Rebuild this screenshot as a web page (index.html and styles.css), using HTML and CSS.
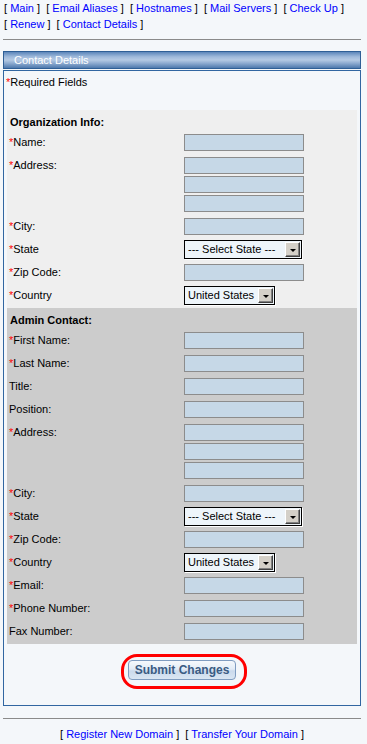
FILE: index.html
```html
<!DOCTYPE html>
<html lang="en">
<head>
    <meta charset="UTF-8">
    <meta name="viewport" content="width=device-width, initial-scale=1.0">
    <title>Contact Details</title>
    <link rel="stylesheet" href="styles.css">
</head>
<body>

    <div class="page">
        <div class="nav">
            [ <a href="#">Main</a> ] &nbsp;[ <a href="#">Email Aliases</a> ] &nbsp;[ <a href="#">Hostnames</a> ] &nbsp;[ <a href="#">Mail Servers</a> ] &nbsp;[ <a href="#">Check Up</a> ]<br>
            [ <a href="#">Renew</a> ] &nbsp;[ <a href="#">Contact Details</a> ]
        </div>

        <hr class="rule rule-top">

        <div class="bar">Contact Details</div>

        <div class="panel">
            <p class="required"><span class="req">*</span>Required Fields</p>

            <div class="section org">
                <div class="section-title">Organization Info:</div>
                <div class="row">
                    <label><span class="req">*</span>Name:</label>
                    <div class="fields"><input type="text" class="field"></div>
                </div>
                <div class="row">
                    <label><span class="req">*</span>Address:</label>
                    <div class="fields">
                        <input type="text" class="field">
                        <input type="text" class="field">
                        <input type="text" class="field">
                    </div>
                </div>
                <div class="row">
                    <label><span class="req">*</span>City:</label>
                    <div class="fields"><input type="text" class="field"></div>
                </div>
                <div class="row">
                    <label><span class="req">*</span>State</label>
                    <div class="fields">
                        <span class="dropdown state"><span class="dropdown-text">--- Select State ---</span><span class="dropdown-btn"><span class="arrow"></span></span></span>
                    </div>
                </div>
                <div class="row">
                    <label><span class="req">*</span>Zip Code:</label>
                    <div class="fields"><input type="text" class="field"></div>
                </div>
                <div class="row">
                    <label><span class="req">*</span>Country</label>
                    <div class="fields">
                        <span class="dropdown country"><span class="dropdown-text">United States</span><span class="dropdown-btn"><span class="arrow"></span></span></span>
                    </div>
                </div>
            </div>

            <div class="section admin">
                <div class="section-title">Admin Contact:</div>
                <div class="row">
                    <label><span class="req">*</span>First Name:</label>
                    <div class="fields"><input type="text" class="field"></div>
                </div>
                <div class="row">
                    <label><span class="req">*</span>Last Name:</label>
                    <div class="fields"><input type="text" class="field"></div>
                </div>
                <div class="row">
                    <label>Title:</label>
                    <div class="fields"><input type="text" class="field"></div>
                </div>
                <div class="row">
                    <label>Position:</label>
                    <div class="fields"><input type="text" class="field"></div>
                </div>
                <div class="row">
                    <label><span class="req">*</span>Address:</label>
                    <div class="fields">
                        <input type="text" class="field">
                        <input type="text" class="field">
                        <input type="text" class="field">
                    </div>
                </div>
                <div class="row">
                    <label><span class="req">*</span>City:</label>
                    <div class="fields"><input type="text" class="field"></div>
                </div>
                <div class="row">
                    <label><span class="req">*</span>State</label>
                    <div class="fields">
                        <span class="dropdown state"><span class="dropdown-text">--- Select State ---</span><span class="dropdown-btn"><span class="arrow"></span></span></span>
                    </div>
                </div>
                <div class="row">
                    <label><span class="req">*</span>Zip Code:</label>
                    <div class="fields"><input type="text" class="field"></div>
                </div>
                <div class="row">
                    <label><span class="req">*</span>Country</label>
                    <div class="fields">
                        <span class="dropdown country"><span class="dropdown-text">United States</span><span class="dropdown-btn"><span class="arrow"></span></span></span>
                    </div>
                </div>
                <div class="row">
                    <label><span class="req">*</span>Email:</label>
                    <div class="fields"><input type="text" class="field"></div>
                </div>
                <div class="row">
                    <label><span class="req">*</span>Phone Number:</label>
                    <div class="fields"><input type="text" class="field"></div>
                </div>
                <div class="row">
                    <label>Fax Number:</label>
                    <div class="fields"><input type="text" class="field"></div>
                </div>
            </div>

            <div class="submit-row">
                <span class="highlight"><button type="button" class="submit">Submit Changes</button></span>
            </div>
        </div>

        <hr class="rule rule-bottom">

        <div class="footer-links">
            [ <a href="#">Register New Domain</a> ] &nbsp;[ <a href="#">Transfer Your Domain</a> ]
        </div>
    </div>

</body>
</html>
```

FILE: styles.css
```css
body {
    font-family: "Liberation Sans", Arial, sans-serif;
    font-size: 11px;
    color: #000;
    background-color: #f4f7fa;
    margin: 0;
    padding: 0;
}

a {
    color: #0000ff;
    text-decoration: none;
}

.page {
    width: 358px;
    margin-left: 3px;
}

.nav {
    line-height: 16px;
    padding-left: 1px;
}

.rule {
    border: 0;
    border-top: 1px solid #8a8a8a;
    height: 0;
}

.rule-top {
    margin: 7px 0 11px 0;
}

.rule-bottom {
    margin: 12px 0 7px 0;
}

.bar {
    height: 16px;
    line-height: 16px;
    border: 1px solid #2f5f96;
    background: linear-gradient(#5c86ba, #9fbadb 30%, #b4c9e3 50%, #8eabd0 70%, #4e79ad);
    color: white;
    padding-left: 10px;
    margin-bottom: 1px;
}

.panel {
    border: 1px solid #3166a1;
    padding: 3px;
}

.required {
    margin: 0 0 20px -1px;
    line-height: 16px;
}

.req {
    color: #ff0000;
}

.section {
    padding: 0 0 1px 2px;
}

.org {
    background-color: #efefef;
}

.admin {
    background-color: #cccccc;
}

.section-title {
    font-weight: bold;
    height: 17px;
    line-height: 16px;
    padding: 4px 0 0 1px;
}

.row {
    display: flex;
    align-items: flex-start;
    padding: 3px 0;
}

.row label {
    width: 175px;
    line-height: 17px;
}

.fields {
    display: flex;
    flex-direction: column;
    align-items: flex-start;
    gap: 2px;
}

.field {
    box-sizing: border-box;
    width: 120px;
    height: 17px;
    margin: 0;
    padding: 0 2px;
    border: 1px solid #8c8c8c;
    background-color: #c6d8e7;
    font-family: inherit;
    font-size: 11px;
}

.dropdown {
    box-sizing: border-box;
    display: flex;
    align-items: flex-start;
    height: 19px;
    margin: -1px 0 -1px 0;
    border: 1px solid #000;
    box-shadow: 1px 1px 0 #ffffff;
    background-color: #eef5fa;
}

.dropdown.state {
    width: 118px;
}

.dropdown.country {
    width: 91px;
}

.dropdown-text {
    flex: 1;
    padding-left: 3px;
    line-height: 17px;
    white-space: nowrap;
}

.dropdown-btn {
    box-sizing: border-box;
    display: flex;
    align-items: center;
    justify-content: center;
    width: 15px;
    height: 15px;
    margin: 1px 1px 0 0;
    background-color: #d4d0c8;
    border-top: 1px solid #ffffff;
    border-left: 1px solid #ffffff;
    border-right: 1px solid #404040;
    border-bottom: 1px solid #404040;
    box-shadow: inset -1px -1px 0 #808080;
}

.arrow {
    width: 0;
    height: 0;
    margin-top: 2px;
    border-left: 3px solid transparent;
    border-right: 3px solid transparent;
    border-top: 3px solid #000;
}

.submit-row {
    display: flex;
    justify-content: center;
    margin: 10px 0 13px 4px;
}

.highlight {
    display: flex;
    padding: 3px 8px 6px 4px;
    border: 3px solid #ff0000;
    border-radius: 16px;
}

.submit {
    width: 108px;
    height: 20px;
    padding: 0;
    border: 1px solid #7f9cc0;
    border-radius: 4px;
    background: linear-gradient(#f6f9fc, #e3ecf6 45%, #cbdaec 55%, #dae6f3);
    color: #3a5b83;
    font-family: "Liberation Sans", Arial, sans-serif;
    font-size: 12px;
    font-weight: bold;
    cursor: pointer;
}

.footer-links {
    text-align: center;
    line-height: 16px;
}
```
